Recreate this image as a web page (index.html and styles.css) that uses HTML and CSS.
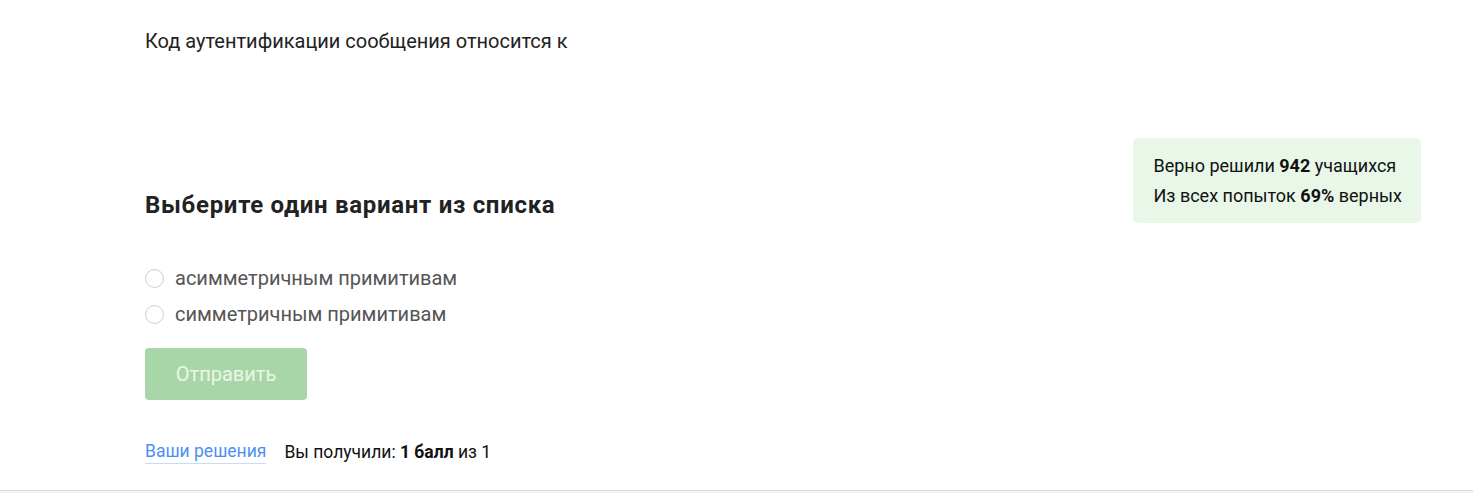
FILE: index.html
```html
<!DOCTYPE html>
<html lang="ru">
<head>
<meta charset="utf-8">
<title>Вопрос</title>
<link rel="stylesheet" href="styles.css">
</head>
<body>
<main class="page">
  <p class="question">Код аутентификации сообщения относится к</p>
  <div class="top-row">
    <h2 class="heading">Выберите один вариант из списка</h2>
    <div class="stats">
      <div>Верно решили <b>942</b> учащихся</div>
      <div>Из всех попыток <b>69%</b> верных</div>
    </div>
  </div>
  <ul class="options">
    <li class="option"><span class="radio"></span>асимметричным примитивам</li>
    <li class="option"><span class="radio"></span>симметричным примитивам</li>
  </ul>
  <button class="submit" disabled>Отправить</button>
  <div class="footer">
    <a class="link" href="#">Ваши решения</a>
    <span class="score">Вы получили: <b>1 балл</b> из 1</span>
  </div>
</main>
<div class="bottom"></div>
</body>
</html>
```
FILE: styles.css
```css
html, body {
  margin: 0;
  padding: 0;
  background: #fff;
}
body {
  font-family: Roboto, "Noto Sans", sans-serif;
  color: #222;
  height: 493px;
  overflow: hidden;
}
.page {
  padding: 0 52px 0 145px;
}
.question {
  margin: 0;
  padding-top: 29px;
  font-size: 20px;
  line-height: 24px;
  color: #222;
}
.top-row {
  display: flex;
  justify-content: space-between;
  align-items: flex-end;
  margin-top: 85px;
}
.heading {
  margin: 0 0 3px;
  font-size: 24px;
  letter-spacing: 0.7px;
  line-height: 30px;
  font-weight: 700;
  color: #222;
}
.stats {
  background: #e8f7e8;
  border-radius: 5px;
  padding: 13px 19px 12px 20px;
  font-size: 18px;
  line-height: 30px;
  color: #111;
}
.stats b {
  font-weight: 700;
}
.options {
  list-style: none;
  margin: 37px 0 0;
  padding: 0;
}
.option {
  display: flex;
  align-items: center;
  height: 36px;
  font-size: 20px;
  color: #555;
}
.radio {
  box-sizing: border-box;
  width: 19px;
  height: 19px;
  border: 1px solid #cfcfcf;
  border-radius: 50%;
  margin-right: 11px;
}
.submit {
  display: block;
  margin-top: 16px;
  width: 162px;
  height: 52px;
  border: none;
  border-radius: 4px;
  background: #a9d6a8;
  color: #e9f6e6;
  font-family: Roboto, "Noto Sans", sans-serif;
  font-size: 20px;
  padding: 0;
}
.footer {
  margin-top: 40px;
  font-size: 17.5px;
  line-height: 24px;
  display: flex;
  gap: 18px;
}
.link {
  color: #4d8ff0;
  text-decoration: none;
  border-bottom: 1px solid #c5dcfb;
  line-height: 21px;
  margin-top: 1px;
}
.score {
  color: #111;
}
.score b {
  font-weight: 700;
}
.bottom {
  position: absolute;
  left: 0;
  right: 0;
  top: 490px;
  height: 3px;
  border-top: 1px solid #dcdcdc;
  background: #f2f2f2;
}
```
